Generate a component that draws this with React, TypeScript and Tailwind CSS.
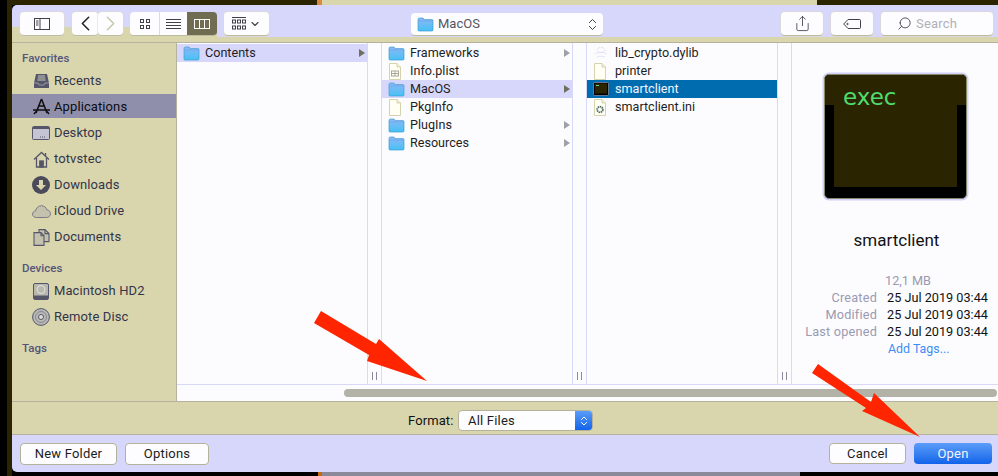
import React from 'react';
import { ChevronLeft, ChevronRight, ChevronDown, ChevronsUpDown, Search, Share } from 'lucide-react';

const FONT = "font-['Roboto','Liberation_Sans',sans-serif]";

function Folder() {
  return (
    <svg width="17" height="15" viewBox="0 0 17 15" className="shrink-0">
      <defs>
        <linearGradient id="folderFill" x1="0" y1="0" x2="0" y2="1">
          <stop offset="0" stopColor="#8fb8f5" />
          <stop offset="1" stopColor="#45c1f5" />
        </linearGradient>
      </defs>
      <path d="M1 2.500C1 1.600 1.600 1 2.400 1H6l1.400 1.600H15c.6 0 1 .4 1 1V13c0 .6-.4 1-1 1H2c-.6 0-1-.4-1-1z" fill="url(#folderFill)" stroke="#3f9fce" strokeWidth=".7" />
      <path d="M1 4h15" stroke="#6fa6e8" strokeWidth=".8" />
    </svg>
  );
}

function Doc({ children }: { children?: React.ReactNode }) {
  return (
    <svg width="14" height="17" viewBox="0 0 14 17" className="shrink-0">
      <path d="M1.500.5h7.500l3.500 3.500v12.500h-11z" fill="#fffff4" stroke="#d5d3ad" />
      <path d="M9 .5V4h3.500" fill="#f0eed8" stroke="#d5d3ad" />
      {children}
    </svg>
  );
}

function ExecMini() {
  return (
    <svg width="16" height="14" viewBox="0 0 16 14" className="shrink-0">
      <rect x=".5" y=".5" width="15" height="13" rx="1" fill="#000" stroke="#a8a8b8" strokeWidth=".6" />
      <rect x="2" y="1.500" width="12" height="10" fill="#2a2500" />
      <path d="M3 3.500h3" stroke="#5ad76e" />
    </svg>
  );
}

function Dylib() {
  return (
    <svg width="16" height="14" viewBox="0 0 16 14" className="shrink-0" fill="none" stroke="#d6d6f0" strokeDasharray="1.500 1">
      <ellipse cx="8" cy="4" rx="4" ry="2.500" />
      <path d="M2 8c3-2 9-2 12 0M4 11c2-1 6-1 8 0" />
    </svg>
  );
}

function SideIcon({ name }: { name: string }) {
  const c = '#56566a';
  if (name === 'recents')
    return (
      <svg width="17" height="16" viewBox="0 0 17 16">
        <path d="M3 1h11l2 9v5H1v-5z" fill={c} />
        <path d="M5 3h7M4.700 5h7.600M4.400 7h8.200" stroke="#c8c8c0" />
        <path d="M1 10h4l1 2h5l1-2h4" fill="none" stroke="#c8c8c0" strokeWidth=".6" />
      </svg>
    );
  if (name === 'apps')
    return (
      <svg width="19" height="18" viewBox="0 0 19 18" fill="none" stroke="#111" strokeWidth="1.600">
        <path d="M9.500 1L4 15M9.500 1L15 15M1 12h17M6 8h7" />
        <path d="M2 16l2-2.500M17 16l-2-2.500" />
      </svg>
    );
  if (name === 'desktop')
    return (
      <svg width="18" height="14" viewBox="0 0 18 14">
        <rect x=".5" y=".5" width="17" height="13" rx="1" fill="#c4c4d4" stroke={c} />
        <rect x="1" y="1" width="16" height="2" fill={c} />
        <path d="M8 11h1M10 11h1M12 11h1" stroke={c} />
      </svg>
    );
  if (name === 'home')
    return (
      <svg width="17" height="17" viewBox="0 0 17 17" fill="none" stroke={c} strokeWidth="1.300">
        <path d="M1 8.500L8.500 1.500 16 8.500M3.500 7v9h10V7M12.500 2v3" />
        <rect x="6.800" y="10" width="3.400" height="6" fill={c} />
      </svg>
    );
  if (name === 'downloads')
    return (
      <svg width="18" height="18" viewBox="0 0 18 18">
        <circle cx="9" cy="9" r="9" fill="#4a4a5a" />
        <path d="M7 4h4v5h3l-5 5-5-5h3z" fill="#d9d6ae" />
      </svg>
    );
  if (name === 'cloud')
    return (
      <svg width="19" height="13" viewBox="0 0 19 13">
        <path d="M4.500 12.500C2 12.500.5 11 .5 9.200c0-1.700 1.300-3 3-3.200C4 3 6.500.7 9.500.7c2.700 0 4.700 1.800 5.200 4 2 .4 3.800 1.800 3.800 4 0 2.100-1.700 3.800-4 3.800z" fill="#c4c2ac" stroke="#7a7a88" />
      </svg>
    );
  if (name === 'docs')
    return (
      <svg width="17" height="17" viewBox="0 0 17 17" fill="#c4c2ac" stroke={c} strokeWidth="1.100">
        <path d="M6 .6h6l4 4v8H6z" />
        <path d="M1 3.600h7l3 3.200v9.600H1z" />
        <path d="M8 3.600v3.200h3M12 .6v4h4" fill="none" />
      </svg>
    );
  if (name === 'hd')
    return (
      <svg width="16" height="17" viewBox="0 0 16 17">
        <rect x=".5" y=".5" width="15" height="16" rx="1.500" fill="#b8b8b0" stroke={c} />
        <circle cx="8" cy="6.500" r="4" fill="none" stroke="#e4e4d8" />
        <rect x="1" y="12.500" width="14" height="3.500" fill={c} />
      </svg>
    );
  return (
    <svg width="18" height="18" viewBox="0 0 18 18">
      <circle cx="9" cy="9" r="8.400" fill="#b8b8b8" stroke={c} />
      <circle cx="9" cy="9" r="5.500" fill="none" stroke="#8a8a8a" />
      <circle cx="9" cy="9" r="2.500" fill="#e0e0d8" stroke={c} />
    </svg>
  );
}

function SideRow({ icon, label, active }: { icon: string; label: string; active?: boolean }) {
  return (
    <div className={`flex items-center pl-[18px] pt-[2px] ${active ? 'h-[24px] my-px bg-[#8f8fac] text-[#0c0c10]' : 'h-[26px] text-[#34344a]'}`}>
      <span className="w-[24px] flex justify-center shrink-0 -ml-[1px]">
        <SideIcon name={icon} />
      </span>
      <span className="ml-[1px] text-[13px] tracking-[0.1px]">{label}</span>
    </div>
  );
}

function SideHeader({ label, className }: { label: string; className: string }) {
  return <div className={`pl-[10px] text-[11.5px] font-medium text-[#55557a] h-[16px] leading-[16px] ${className}`}>{label}</div>;
}

function Row({ icon, label, arrow, tone }: { icon: React.ReactNode; label: string; arrow?: boolean; tone?: 'soft' | 'strong' }) {
  const bg = tone === 'soft' ? 'bg-[#d7d7fb]' : tone === 'strong' ? 'bg-[#006cb0]' : '';
  return (
    <div className={`h-[18px] flex items-center text-[12.6px] text-[#1e1e22] ${bg}`}>
      <span className="w-[23px] pl-[6px] shrink-0 flex items-center">{icon}</span>
      <span className={`ml-[5px] flex-1 ${tone === 'strong' ? 'text-[#f4f4ff]' : ''}`}>{label}</span>
      {arrow && (
        <span className={`mr-[2px] w-0 h-0 border-y-[4px] border-y-transparent border-l-[6px] ${tone === 'soft' ? 'border-l-[#6f6f60]' : 'border-l-[#a0a0a8]'}`} />
      )}
    </div>
  );
}

function Handle() {
  return (
    <div className="border-x border-[#d8d8f8] w-[15px] shrink-0 flex items-end justify-center pb-[4px] gap-[3px] h-full">
      <span className="w-px h-[8px] bg-[#8a8a9a]" />
      <span className="w-px h-[8px] bg-[#8a8a9a]" />
    </div>
  );
}

function ToolBtn({ className, children }: { className: string; children?: React.ReactNode }) {
  return (
    <div className={`h-[24px] bg-[#fdfdff] rounded-[4px] border-b border-b-[#bdbb9e] shadow-[0_0_0_0.5px_#dddabb] flex items-center justify-center text-[#404048] shrink-0 ${className}`}>
      {children}
    </div>
  );
}

function MetaRow({ label, value }: { label: string; value: string }) {
  return (
    <div className="h-[17px] flex items-center text-[12.7px]">
      <span className="w-[85px] text-right tracking-[0.2px] text-[#9a9ab0]">{label}</span>
      <span className="ml-[10px] text-[#111] whitespace-nowrap">{value}</span>
    </div>
  );
}

function ActionBtn({ label, className }: { label: string; className: string }) {
  return (
    <div className={`rounded-[4px] bg-[#fdfdff] border border-[#b4b29a] flex items-center justify-center text-[13px] tracking-[0.2px] text-[#1c1c1c] shrink-0 ${className}`}>
      {label}
    </div>
  );
}

export default function App() {
  return (
    <div className={`${FONT} relative w-[998px] h-[476px] overflow-hidden flex bg-black`}>
      <div className="w-[7px] bg-black shrink-0" />
      <div className="w-[5px] bg-[#2a2500] shrink-0" />
      <div className="flex-1 flex flex-col min-w-0">
        <div className="h-[5px] flex shrink-0">
          <div className="w-[305px] bg-[#2a2500]" />
          <div className="w-[5px] bg-[#d98a3c]" />
          <div className="w-[495px] bg-[#d9d6ae]" />
          <div className="flex-1 bg-[#2a2500]" />
        </div>

        <div className="h-[467px] flex flex-col bg-[#d7d7fb] rounded-tl-[5px] rounded-bl-[5px] overflow-hidden shrink-0">
          {/* Toolbar */}
          <div className="relative h-[38px] shrink-0 flex items-start pt-[7px] pl-[8px] border-b border-[#b5b3a0]">
            <div className="absolute left-0 bottom-0 w-[205px] h-[15px] bg-[#d9d6ae]" />
            <div className="absolute left-0 right-0 bottom-0 h-[5px] bg-[#d9d6ae]" />
            <ToolBtn className="relative w-[44px]">
              <svg width="16" height="12" viewBox="0 0 16 12" fill="none" stroke="#404048">
                <rect x=".5" y=".5" width="15" height="11" />
                <path d="M6 .5v11M2 3h2.500M2 5h2.500M2 7h2.500" />
              </svg>
            </ToolBtn>
            <ToolBtn className="relative w-[26px] ml-[8px]">
              <ChevronLeft size={25} strokeWidth={1.5} color="#222" />
            </ToolBtn>
            <ToolBtn className="relative w-[25px]">
              <ChevronRight size={25} strokeWidth={1.3} color="#c4c4a8" />
            </ToolBtn>
            <div className="relative ml-[7px] w-[87px] h-[24px] flex rounded-[4px] overflow-hidden border-b border-b-[#bdbb9e] shrink-0">
              <div className="w-[30px] bg-[#fdfdff] flex items-center justify-center border-r border-[#d8d8f8]">
                <svg width="10" height="10" viewBox="0 0 10 10" fill="none" stroke="#404048">
                  <rect x=".5" y=".5" width="3" height="3" />
                  <rect x="6.500" y=".5" width="3" height="3" />
                  <rect x=".5" y="6.500" width="3" height="3" />
                  <rect x="6.500" y="6.500" width="3" height="3" />
                </svg>
              </div>
              <div className="w-[27px] bg-[#fdfdff] flex items-center justify-center">
                <svg width="15" height="10" viewBox="0 0 15 10" stroke="#404048">
                  <path d="M0 .5h15M0 3.500h15M0 6.500h15M0 9.500h15" />
                </svg>
              </div>
              <div className="flex-1 bg-[#6f6c52] flex items-center justify-center">
                <svg width="16" height="10" viewBox="0 0 16 10" fill="none" stroke="#fdfdff">
                  <rect x=".5" y=".5" width="15" height="9" />
                  <path d="M5.500 .5v9M10.500 .5v9" />
                </svg>
              </div>
            </div>
            <ToolBtn className="relative w-[45px] ml-[7px] gap-[3px]">
              <svg width="14" height="13" viewBox="0 0 14 13" fill="none" stroke="#404048">
                <path d="M0 .5h14" />
                <rect x=".5" y="3" width="3" height="3" />
                <rect x="5.500" y="3" width="3" height="3" />
                <rect x="10.500" y="3" width="3" height="3" />
                <rect x=".5" y="9" width="3" height="3" />
                <rect x="5.500" y="9" width="3" height="3" />
                <rect x="10.500" y="9" width="3" height="3" />
              </svg>
              <ChevronDown size={12} strokeWidth={2.2} color="#404048" />
            </ToolBtn>

            <div className="relative ml-[142px] mt-px w-[192px] h-[23px] bg-[#fdfdff] rounded-[4px] border-b border-b-[#bdbb9e] flex items-center pl-[6px] pr-[3px] shrink-0">
              <Folder />
              <span className="ml-[4px] flex-1 text-[13px] text-[#55555f]">MacOS</span>
              <ChevronsUpDown size={15} strokeWidth={1.5} color="#333" />
            </div>

            <ToolBtn className="relative w-[42px] ml-[178px]">
              <Share size={17} strokeWidth={1.2} color="#404048" />
            </ToolBtn>
            <ToolBtn className="relative w-[42px] ml-[8px]">
              <svg width="18" height="10" viewBox="0 0 18 10" fill="none" stroke="#404048">
                <path d="M5 .5h11.500a1 1 0 0 1 1 1v7a1 1 0 0 1-1 1H5L.7 5z" />
                <circle cx="4.500" cy="5" r=".7" />
              </svg>
            </ToolBtn>
            <ToolBtn className="relative w-[112px] ml-[8px] !justify-start pl-[16px]">
              <Search size={15} strokeWidth={1.4} color="#404048" className="-scale-x-100" />
              <span className="ml-[4px] text-[13px] tracking-[0.2px] text-[#b0b0b8]">Search</span>
            </ToolBtn>
          </div>

          {/* Browser */}
          <div className="h-[359px] flex shrink-0 bg-[#d9d6ae] border-b border-[#b5b3a0]">
            <aside className="w-[165px] shrink-0 border-r border-[#b5b3a0]">
              <SideHeader label="Favorites" className="mt-[7px]" />
              <div className="mt-[1px]">
                <SideRow icon="recents" label="Recents" />
                <SideRow icon="apps" label="Applications" active />
                <SideRow icon="desktop" label="Desktop" />
                <SideRow icon="home" label="totvstec" />
                <SideRow icon="downloads" label="Downloads" />
                <SideRow icon="cloud" label="iCloud Drive" />
                <SideRow icon="docs" label="Documents" />
              </div>
              <SideHeader label="Devices" className="mt-[11px]" />
              <div className="mt-[1px]">
                <SideRow icon="hd" label="Macintosh HD2" />
                <SideRow icon="disc" label="Remote Disc" />
              </div>
              <SideHeader label="Tags" className="mt-[11px]" />
            </aside>

            <div className="flex-1 min-w-0 flex flex-col bg-[#fcfcff]">
              <div className="h-[342px] flex border-b border-[#d8d8f8] shrink-0">
                <div className="w-[190px] shrink-0 pt-px">
                  <Row icon={<Folder />} label="Contents" arrow tone="soft" />
                </div>
                <Handle />
                <div className="w-[190px] shrink-0 pt-px">
                  <Row icon={<Folder />} label="Frameworks" arrow />
                  <Row
                    icon={
                      <Doc>
                        <rect x="3.500" y="8" width="7" height="5" fill="none" stroke="#a8a898" />
                        <path d="M3.500 10.500h7M7 8v5" stroke="#a8a898" />
                      </Doc>
                    }
                    label="Info.plist"
                  />
                  <Row icon={<Folder />} label="MacOS" arrow tone="soft" />
                  <Row icon={<Doc />} label="PkgInfo" />
                  <Row icon={<Folder />} label="PlugIns" arrow />
                  <Row icon={<Folder />} label="Resources" arrow />
                </div>
                <Handle />
                <div className="w-[190px] shrink-0 pt-px">
                  <Row icon={<Dylib />} label="lib_crypto.dylib" />
                  <Row icon={<Doc />} label="printer" />
                  <Row icon={<ExecMini />} label="smartclient" tone="strong" />
                  <Row
                    icon={
                      <Doc>
                        <circle cx="7" cy="10.500" r="2.800" fill="none" stroke="#4d6e68" strokeWidth="1.800" strokeDasharray="1.500 .6" />
                      </Doc>
                    }
                    label="smartclient.ini"
                  />
                </div>
                <Handle />
                <div className="flex-1 min-w-0">
                  <div className="mt-[31px] ml-[32px] w-[143px] h-[125px] rounded-[5px] bg-black border border-[#8a8a70] shadow-[0_0_0_1.5px_#d0d0fa] relative overflow-hidden">
                    <div className="mx-[9px] h-[112px] bg-[#2a2500]" />
                    <div className="absolute top-0 left-0 right-0 h-[30px] bg-[#2a2500]" />
                    <div className="absolute top-[5px] left-[18px] text-[23px] leading-[34px] text-[#4fdc6c] font-['DejaVu_Sans',sans-serif]">exec</div>
                  </div>
                  <div className="mt-[31px] ml-[33px] w-[143px] text-center text-[17px] leading-[20px] text-[#111]">smartclient</div>
                  <div className="mt-[22px]">
                    <div className="h-[17px] flex items-center text-[12.7px] text-[#9a9ab0] pl-[93px]">12,1 MB</div>
                    <MetaRow label="Created" value="25 Jul 2019 03:44" />
                    <MetaRow label="Modified" value="25 Jul 2019 03:44" />
                    <MetaRow label="Last opened" value="25 Jul 2019 03:44" />
                    <div className="h-[19px] flex items-center text-[12.4px] text-[#3d8cf5] pl-[96px]">Add Tags...</div>
                  </div>
                </div>
              </div>
              <div className="flex-1 flex items-center pl-[167px] pr-px">
                <div className="w-full h-[8px] rounded-full bg-[#b2b2a6]" />
              </div>
            </div>
          </div>

          {/* Format */}
          <div className="h-[33px] shrink-0 bg-[#d9d6ae] border-b border-[#b5b3a0] flex items-start pt-[8px] pl-[396px]">
            <span className="w-[46px] h-[21px] leading-[21px] text-[13px] tracking-[0.1px] text-[#111]">Format:</span>
            <div className="ml-[4px] w-[135px] h-[21px] rounded-[4px] bg-[#fdfdff] border border-[#b4b29a] flex items-center overflow-hidden">
              <span className="flex-1 pl-[9px] text-[13px] tracking-[0.2px] text-[#1c1c1c]">All Files</span>
              <div className="w-[17px] h-full bg-gradient-to-b from-[#5a9cf8] to-[#0f63ea] flex items-center justify-center">
                <ChevronsUpDown size={12} strokeWidth={2} color="#fff" />
              </div>
            </div>
          </div>

          {/* Actions */}
          <div className="flex-1 flex items-start pt-[8px] pl-[8px]">
            <ActionBtn label="New Folder" className="w-[97px] h-[22px]" />
            <ActionBtn label="Options" className="w-[84px] h-[22px] ml-[8px]" />
            <ActionBtn label="Cancel" className="w-[77px] ml-[620px] h-[21px]" />
            <div className="ml-[8px] w-[78px] h-[21px] rounded-[4px] bg-gradient-to-b from-[#5a9cf8] to-[#0f63ea] flex items-center justify-center text-[13px] tracking-[0.2px] text-[#f4f4ff] shrink-0">
              Open
            </div>
          </div>
        </div>

        <div className="flex-1 flex">
          <div className="w-[306px] bg-black" />
          <div className="w-[4px] bg-[#c46a10]" />
          <div className="w-[478px] bg-[#8a8a9a]" />
          <div className="flex-1 bg-black" />
        </div>
      </div>

      {/* Annotation arrows */}
      <svg className="absolute inset-0 pointer-events-none" width="998" height="476" viewBox="0 0 998 476">
        <polygon points="321,311 376,344 379,339 427,381 367,361 369,355 314,323" fill="#fe2500" />
        <polygon points="818,364 871,402 874,393 920,437 862,411 866,408 812,373" fill="#fe2500" />
      </svg>
    </div>
  );
}
